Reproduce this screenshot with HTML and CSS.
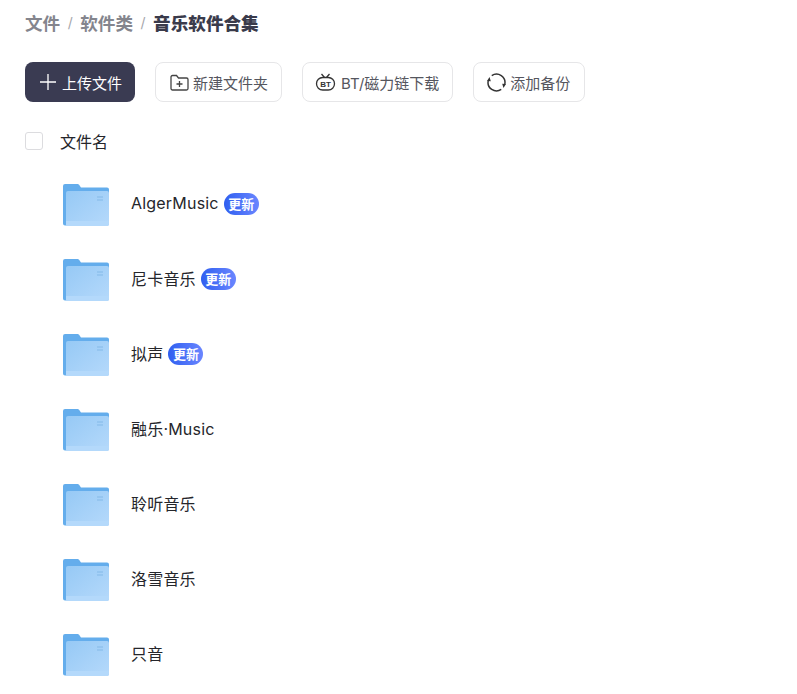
FILE: index.html
```html
<!DOCTYPE html>
<html lang="zh">
<head>
    <meta charset="UTF-8">
    <meta name="viewport" content="width=device-width, initial-scale=1.0">
    <title>音乐软件合集</title>
    <link rel="stylesheet" href="styles.css">
</head>
<body>
    <svg class="defs" width="0" height="0">
        <defs>
            <linearGradient id="folder-front" x1="0" y1="0" x2="1" y2="1">
                <stop offset="0" stop-color="#96c9f5"/>
                <stop offset="1" stop-color="#b5d9fb"/>
            </linearGradient>
            <symbol id="folder" viewBox="0 0 46 42">
                <path d="M0 2a2 2 0 0 1 2-2h12.500a2 2 0 0 1 1.600.8L18 3.500H44a2 2 0 0 1 2 2v34a2 2 0 0 1-2 2H2a2 2 0 0 1-2-2z" fill="#64adec"/>
                <path d="M3 9a2 2 0 0 1 2-2h39a2 2 0 0 1 2 2v31a2 2 0 0 1-2 2H3z" fill="url(#folder-front)"/>
                <path d="M3 37h43v3a2 2 0 0 1-2 2H3z" fill="#b4d9fb"/>
                <path d="M34 12.500h6v1h-6zM34 15.500h6v1h-6z" fill="#84b9e8"/>
            </symbol>
        </defs>
    </svg>

    <div class="breadcrumb">
        <a>文件</a>
        <span class="sep">/</span>
        <a>软件类</a>
        <span class="sep">/</span>
        <strong>音乐软件合集</strong>
    </div>

    <div class="toolbar">
        <button class="btn primary">
            <svg width="16" height="16" viewBox="0 0 16 16"><path d="M8 0v16M0 8h16" stroke="#fff" stroke-width="1.300" fill="none"/></svg>
            上传文件
        </button>
        <button class="btn">
            <svg width="19" height="17" viewBox="0 0 19 17" fill="none" stroke="#444" stroke-width="1.300"><path d="M1 3a1.500 1.500 0 0 1 1.500-1.500h4L8.500 4H16.500A1.500 1.500 0 0 1 18 5.500v9a1.500 1.500 0 0 1-1.500 1.500h-14A1.500 1.500 0 0 1 1 14.500z"/><path d="M9.500 7v6M6.500 10h6"/></svg>
            新建文件夹
        </button>
        <button class="btn bt">
            <svg width="21" height="18" viewBox="0 0 20 18" fill="none" stroke="#333" stroke-width="1.300"><path d="M6 1l3 3.500M14 1l-3 3.500"/><rect x="1" y="4.500" width="18" height="12.500" rx="6.200"/><text x="10" y="13.700" class="bt-mark">BT</text></svg>
            BT/磁力链下载
        </button>
        <button class="btn backup">
            <svg width="19" height="19" viewBox="0 0 18 18" fill="none" stroke="#333" stroke-width="1.400"><path d="M4.500 2.400A8 8 0 0 1 16.800 10.800"/><path d="M13.500 15.600A8 8 0 0 1 1.200 7.200"/><path d="M0 7.500L3.600 7.800L2.400 3.800zM18 10.500L14.400 10.200L15.600 14.200z" fill="#333" stroke="none"/></svg>
            添加备份
        </button>
    </div>

    <div class="list-head">
        <span class="checkbox"></span>
        <span>文件名</span>
    </div>

    <ul class="file-list">
        <li class="file-row">
            <svg class="folder-icon"><use href="#folder"/></svg>
            <span class="file-name">AlgerMusic</span>
            <span class="badge">更新</span>
        </li>
        <li class="file-row">
            <svg class="folder-icon"><use href="#folder"/></svg>
            <span class="file-name">尼卡音乐</span>
            <span class="badge">更新</span>
        </li>
        <li class="file-row">
            <svg class="folder-icon"><use href="#folder"/></svg>
            <span class="file-name">拟声</span>
            <span class="badge">更新</span>
        </li>
        <li class="file-row">
            <svg class="folder-icon"><use href="#folder"/></svg>
            <span class="file-name">融乐·Music</span>
        </li>
        <li class="file-row">
            <svg class="folder-icon"><use href="#folder"/></svg>
            <span class="file-name">聆听音乐</span>
        </li>
        <li class="file-row">
            <svg class="folder-icon"><use href="#folder"/></svg>
            <span class="file-name">洛雪音乐</span>
        </li>
        <li class="file-row">
            <svg class="folder-icon"><use href="#folder"/></svg>
            <span class="file-name">只音</span>
        </li>
    </ul>
</body>
</html>
```

FILE: styles.css
```css
html, body {
    height: 100%;
    overflow: hidden;
}

body {
    font-family: 'Inter', 'Noto Sans CJK SC', sans-serif;
    background-color: #fff;
    color: #25262b;
    margin: 0;
    padding: 10px 25px 0;
    box-sizing: border-box;
}

.defs {
    display: block;
    height: 0;
}

.breadcrumb {
    display: flex;
    align-items: center;
    height: 24px;
    font-size: 17.6px;
    font-weight: bold;
    color: #84858d;
}

.breadcrumb strong {
    color: #3a3b4b;
}

.breadcrumb .sep {
    margin: 0 7.500px;
    font-size: 14px;
    font-weight: normal;
    color: #a5a6ab;
}

.toolbar {
    display: flex;
    gap: 20px;
    margin-top: 28px;
}

.btn {
    display: flex;
    align-items: center;
    gap: 4px;
    height: 40px;
    padding: 0 13px 0 14px;
    font-family: inherit;
    font-size: 15px;
    color: #55565e;
    background-color: #fff;
    border: 1px solid #e6e6e8;
    border-radius: 8px;
}

.btn.primary {
    gap: 6px;
    padding: 0 13px 0 15px;
    color: #fff;
    background-color: #3a3b52;
    border: none;
}

.btn.bt {
    gap: 5px;
    padding-left: 12px;
}

.btn.backup {
    gap: 4px;
    padding-right: 14px;
    padding-left: 13px;
}

.bt-mark {
    font-family: 'Liberation Sans', sans-serif;
    font-size: 8px;
    font-weight: bold;
    fill: #333;
    stroke: none;
    text-anchor: middle;
}

.list-head {
    display: flex;
    align-items: center;
    gap: 17px;
    height: 24px;
    margin-top: 27px;
    font-size: 16px;
}

.checkbox {
    width: 16px;
    height: 16px;
    border: 1px solid #dcdcdf;
    border-radius: 3px;
}

.file-list {
    list-style: none;
    margin: 14px 0 0;
    padding: 0 0 0 38px;
}

.file-row {
    display: flex;
    align-items: center;
    height: 75px;
    font-size: 16px;
}

.folder-icon {
    width: 46px;
    height: 42px;
    margin-right: 22px;
}

.file-name {
    margin-bottom: 4px;
    letter-spacing: 0.2px;
}

.badge {
    margin: 0 0 2px 5px;
    padding: 0 4.500px;
    height: 22px;
    line-height: 22px;
    font-size: 13px;
    font-weight: bold;
    color: #fff;
    border-radius: 11px;
    background: linear-gradient(90deg, #2f5ff0, #6a86ff);
}
```
